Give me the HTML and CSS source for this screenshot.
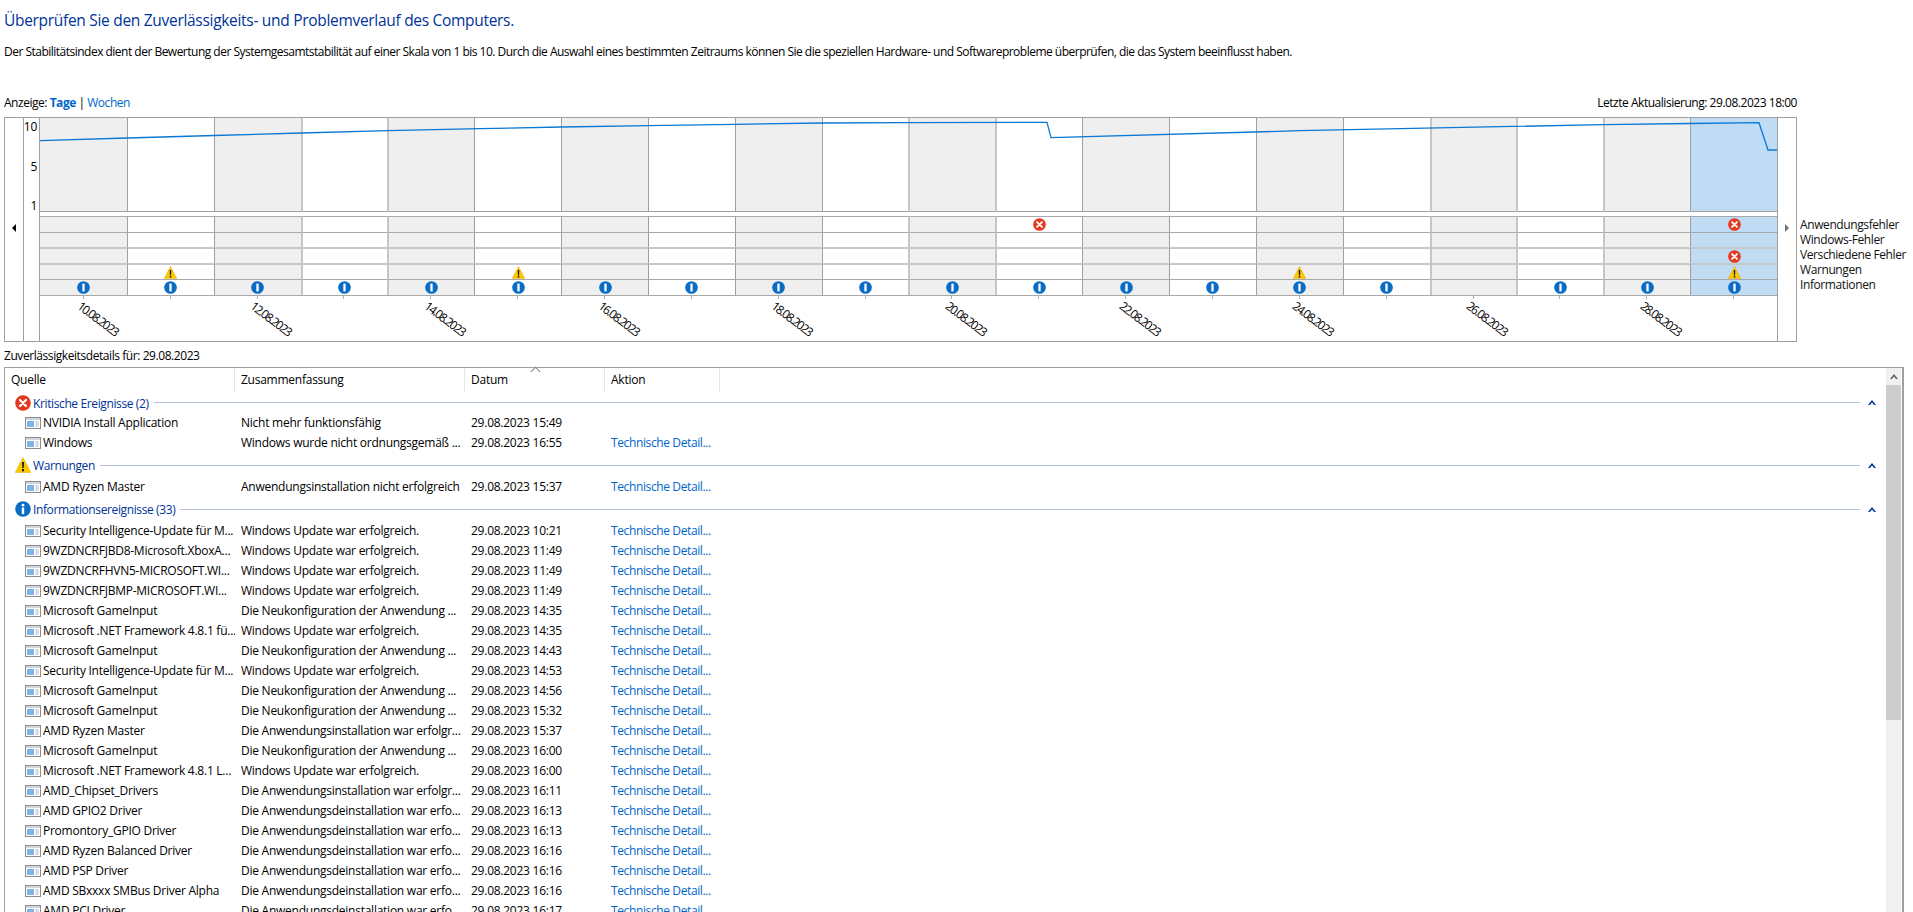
FILE: index.html
```html
<!DOCTYPE html>
<html lang="de">
<head>
    <meta charset="UTF-8">
    <title>Zuverlässigkeitsverlauf</title>
    <link rel="stylesheet" href="styles.css">
</head>
<body>
    <svg class="icon-defs" aria-hidden="true">
        <symbol id="i-error" viewBox="0 0 16 16">
            <circle cx="8" cy="8" r="7.8" fill="#e5391f"/>
            <path d="M5 5l6 6M11 5l-6 6" stroke="#fff" stroke-width="2.2" stroke-linecap="round"/>
        </symbol>
        <symbol id="i-warn" viewBox="0 0 16 16">
            <path d="M8 .6L15.8 15.4H.2z" fill="#fcc800" stroke="#e0a800" stroke-width=".5"/>
            <path d="M7 5h2l-.3 6H7.3zM7 12h2v2.2H7z" fill="#1a1a1a"/>
        </symbol>
        <symbol id="i-info" viewBox="0 0 16 16">
            <circle cx="8" cy="8" r="7.8" fill="#0a6cc4"/>
            <rect x="6.6" y="3.2" width="2.8" height="9.6" fill="#fff"/>
        </symbol>
        <symbol id="i-info-big" viewBox="0 0 16 16">
            <circle cx="8" cy="8" r="7.8" fill="#0a6cc4"/>
            <circle cx="8" cy="4.2" r="1.4" fill="#fff"/>
            <rect x="6.8" y="6.5" width="2.4" height="6.6" fill="#fff"/>
        </symbol>
        <symbol id="i-app" viewBox="0 0 16 12">
            <rect x=".5" y=".5" width="15" height="11" fill="#fff" stroke="#8c8c8c"/>
            <rect x="1" y="1" width="14" height="2" fill="#cfd6df"/>
            <rect x="2" y="4" width="7" height="6" fill="#7fb2e5"/>
            <path d="M10.5 5h3M10.5 7h3M10.5 9h3" stroke="#a8b0ba"/>
        </symbol>
        <symbol id="i-chevron" viewBox="0 0 8 5">
            <path d="M0 5L4 0l4 5H6L4 2.5 2 5z"/>
        </symbol>
    </svg>

    <h1 class="page-title">Überprüfen Sie den Zuverlässigkeits- und Problemverlauf des Computers.</h1>
    <p class="page-intro">Der Stabilitätsindex dient der Bewertung der Systemgesamtstabilität auf einer Skala von 1 bis 10. Durch die Auswahl eines bestimmten Zeitraums können Sie die speziellen Hardware- und Softwareprobleme überprüfen, die das System beeinflusst haben.</p>

    <div class="toolbar">
        <div>Anzeige: <a href="#" class="view-link active">Tage</a> | <a href="#" class="view-link">Wochen</a></div>
        <div>Letzte Aktualisierung: 29.08.2023 18:00</div>
    </div>

    <div class="chart-row">
        <div class="chart">
            <div class="chart-nav left"><span class="arrow-left"></span></div>
            <div class="axis"><span>10</span><span>5</span><span>1</span></div>
            <div class="plot">
                <div class="day shaded first"><div class="graph"></div><div class="gap"></div><div class="slot"></div><div class="slot"></div><div class="slot"></div><div class="slot"></div><div class="slot"><svg class="ico"><use href="#i-info"/></svg></div><div class="foot"><span class="date">10.08.2023</span></div></div>
                <div class="day"><div class="graph"></div><div class="gap"></div><div class="slot"></div><div class="slot"></div><div class="slot"></div><div class="slot"><svg class="ico"><use href="#i-warn"/></svg></div><div class="slot"><svg class="ico"><use href="#i-info"/></svg></div><div class="foot"></div></div>
                <div class="day shaded"><div class="graph"></div><div class="gap"></div><div class="slot"></div><div class="slot"></div><div class="slot"></div><div class="slot"></div><div class="slot"><svg class="ico"><use href="#i-info"/></svg></div><div class="foot"><span class="date">12.08.2023</span></div></div>
                <div class="day wide"><div class="graph"></div><div class="gap"></div><div class="slot"></div><div class="slot"></div><div class="slot"></div><div class="slot"></div><div class="slot"><svg class="ico"><use href="#i-info"/></svg></div><div class="foot"></div></div>
                <div class="day shaded wide"><div class="graph"></div><div class="gap"></div><div class="slot"></div><div class="slot"></div><div class="slot"></div><div class="slot"></div><div class="slot"><svg class="ico"><use href="#i-info"/></svg></div><div class="foot"><span class="date">14.08.2023</span></div></div>
                <div class="day"><div class="graph"></div><div class="gap"></div><div class="slot"></div><div class="slot"></div><div class="slot"></div><div class="slot"><svg class="ico"><use href="#i-warn"/></svg></div><div class="slot"><svg class="ico"><use href="#i-info"/></svg></div><div class="foot"></div></div>
                <div class="day shaded"><div class="graph"></div><div class="gap"></div><div class="slot"></div><div class="slot"></div><div class="slot"></div><div class="slot"></div><div class="slot"><svg class="ico"><use href="#i-info"/></svg></div><div class="foot"><span class="date">16.08.2023</span></div></div>
                <div class="day"><div class="graph"></div><div class="gap"></div><div class="slot"></div><div class="slot"></div><div class="slot"></div><div class="slot"></div><div class="slot"><svg class="ico"><use href="#i-info"/></svg></div><div class="foot"></div></div>
                <div class="day shaded"><div class="graph"></div><div class="gap"></div><div class="slot"></div><div class="slot"></div><div class="slot"></div><div class="slot"></div><div class="slot"><svg class="ico"><use href="#i-info"/></svg></div><div class="foot"><span class="date">18.08.2023</span></div></div>
                <div class="day"><div class="graph"></div><div class="gap"></div><div class="slot"></div><div class="slot"></div><div class="slot"></div><div class="slot"></div><div class="slot"><svg class="ico"><use href="#i-info"/></svg></div><div class="foot"></div></div>
                <div class="day shaded wide"><div class="graph"></div><div class="gap"></div><div class="slot"></div><div class="slot"></div><div class="slot"></div><div class="slot"></div><div class="slot"><svg class="ico"><use href="#i-info"/></svg></div><div class="foot"><span class="date">20.08.2023</span></div></div>
                <div class="day wide"><div class="graph"></div><div class="gap"></div><div class="slot"><svg class="ico"><use href="#i-error"/></svg></div><div class="slot"></div><div class="slot"></div><div class="slot"></div><div class="slot"><svg class="ico"><use href="#i-info"/></svg></div><div class="foot"></div></div>
                <div class="day shaded"><div class="graph"></div><div class="gap"></div><div class="slot"></div><div class="slot"></div><div class="slot"></div><div class="slot"></div><div class="slot"><svg class="ico"><use href="#i-info"/></svg></div><div class="foot"><span class="date">22.08.2023</span></div></div>
                <div class="day"><div class="graph"></div><div class="gap"></div><div class="slot"></div><div class="slot"></div><div class="slot"></div><div class="slot"></div><div class="slot"><svg class="ico"><use href="#i-info"/></svg></div><div class="foot"></div></div>
                <div class="day shaded"><div class="graph"></div><div class="gap"></div><div class="slot"></div><div class="slot"></div><div class="slot"></div><div class="slot"><svg class="ico"><use href="#i-warn"/></svg></div><div class="slot"><svg class="ico"><use href="#i-info"/></svg></div><div class="foot"><span class="date">24.08.2023</span></div></div>
                <div class="day"><div class="graph"></div><div class="gap"></div><div class="slot"></div><div class="slot"></div><div class="slot"></div><div class="slot"></div><div class="slot"><svg class="ico"><use href="#i-info"/></svg></div><div class="foot"></div></div>
                <div class="day shaded wide"><div class="graph"></div><div class="gap"></div><div class="slot"></div><div class="slot"></div><div class="slot"></div><div class="slot"></div><div class="slot"></div><div class="foot"><span class="date">26.08.2023</span></div></div>
                <div class="day wide"><div class="graph"></div><div class="gap"></div><div class="slot"></div><div class="slot"></div><div class="slot"></div><div class="slot"></div><div class="slot"><svg class="ico"><use href="#i-info"/></svg></div><div class="foot"></div></div>
                <div class="day shaded wide"><div class="graph"></div><div class="gap"></div><div class="slot"></div><div class="slot"></div><div class="slot"></div><div class="slot"></div><div class="slot"><svg class="ico"><use href="#i-info"/></svg></div><div class="foot"><span class="date">28.08.2023</span></div></div>
                <div class="day selected"><div class="graph"></div><div class="gap"></div><div class="slot"><svg class="ico"><use href="#i-error"/></svg></div><div class="slot"></div><div class="slot"><svg class="ico"><use href="#i-error"/></svg></div><div class="slot"><svg class="ico"><use href="#i-warn"/></svg></div><div class="slot"><svg class="ico"><use href="#i-info"/></svg></div><div class="foot"></div></div>
                <svg class="stability-line" viewBox="0 0 1737 94" width="1737" height="94">
                    <polyline points="0,22.7 87,20 174,17.5 261,15 348,12.7 440,10.7 521,9 608,7.7 695,6.3 782,5 865,4.7 1007,4.3 1011,19.7 1260,12.7 1460,8.7 1564,6.7 1650,5.5 1719,4.7 1728,32 1737,32"/>
                </svg>
            </div>
            <div class="chart-nav right"><span class="arrow-right"></span></div>
        </div>
        <div class="legend">
            <div>Anwendungsfehler</div>
            <div>Windows-Fehler</div>
            <div>Verschiedene Fehler</div>
            <div>Warnungen</div>
            <div>Informationen</div>
        </div>
    </div>

    <div class="details-label">Zuverlässigkeitsdetails für: 29.08.2023</div>

    <div class="list">
        <div class="list-body">
            <div class="list-head">
                <div class="head-cell">Quelle</div>
                <div class="head-cell">Zusammenfassung</div>
                <div class="head-cell sorted">Datum</div>
                <div class="head-cell">Aktion</div>
            </div>

            <div class="group first"><svg class="group-ico"><use href="#i-error"/></svg><span class="group-name">Kritische Ereignisse (2)</span><span class="group-line"></span><svg class="group-toggle"><use href="#i-chevron"/></svg></div>
            <div class="row"><div class="source"><svg class="app-ico"><use href="#i-app"/></svg>NVIDIA Install Application</div><div class="cell">Nicht mehr funktionsfähig</div><div class="cell">29.08.2023 15:49</div><div class="cell"></div></div>
            <div class="row"><div class="source"><svg class="app-ico"><use href="#i-app"/></svg>Windows</div><div class="cell">Windows wurde nicht ordnungsgemäß ...</div><div class="cell">29.08.2023 16:55</div><div class="cell"><a href="#">Technische Detail...</a></div></div>

            <div class="group"><svg class="group-ico"><use href="#i-warn"/></svg><span class="group-name">Warnungen</span><span class="group-line"></span><svg class="group-toggle"><use href="#i-chevron"/></svg></div>
            <div class="row"><div class="source"><svg class="app-ico"><use href="#i-app"/></svg>AMD Ryzen Master</div><div class="cell">Anwendungsinstallation nicht erfolgreich</div><div class="cell">29.08.2023 15:37</div><div class="cell"><a href="#">Technische Detail...</a></div></div>

            <div class="group"><svg class="group-ico"><use href="#i-info-big"/></svg><span class="group-name">Informationsereignisse (33)</span><span class="group-line"></span><svg class="group-toggle"><use href="#i-chevron"/></svg></div>
            <div class="row"><div class="source"><svg class="app-ico"><use href="#i-app"/></svg>Security Intelligence-Update für M...</div><div class="cell">Windows Update war erfolgreich.</div><div class="cell">29.08.2023 10:21</div><div class="cell"><a href="#">Technische Detail...</a></div></div>
            <div class="row"><div class="source"><svg class="app-ico"><use href="#i-app"/></svg>9WZDNCRFJBD8-Microsoft.XboxA...</div><div class="cell">Windows Update war erfolgreich.</div><div class="cell">29.08.2023 11:49</div><div class="cell"><a href="#">Technische Detail...</a></div></div>
            <div class="row"><div class="source"><svg class="app-ico"><use href="#i-app"/></svg>9WZDNCRFHVN5-MICROSOFT.WI...</div><div class="cell">Windows Update war erfolgreich.</div><div class="cell">29.08.2023 11:49</div><div class="cell"><a href="#">Technische Detail...</a></div></div>
            <div class="row"><div class="source"><svg class="app-ico"><use href="#i-app"/></svg>9WZDNCRFJBMP-MICROSOFT.WI...</div><div class="cell">Windows Update war erfolgreich.</div><div class="cell">29.08.2023 11:49</div><div class="cell"><a href="#">Technische Detail...</a></div></div>
            <div class="row"><div class="source"><svg class="app-ico"><use href="#i-app"/></svg>Microsoft GameInput</div><div class="cell">Die Neukonfiguration der Anwendung ...</div><div class="cell">29.08.2023 14:35</div><div class="cell"><a href="#">Technische Detail...</a></div></div>
            <div class="row"><div class="source"><svg class="app-ico"><use href="#i-app"/></svg>Microsoft .NET Framework 4.8.1 fü...</div><div class="cell">Windows Update war erfolgreich.</div><div class="cell">29.08.2023 14:35</div><div class="cell"><a href="#">Technische Detail...</a></div></div>
            <div class="row"><div class="source"><svg class="app-ico"><use href="#i-app"/></svg>Microsoft GameInput</div><div class="cell">Die Neukonfiguration der Anwendung ...</div><div class="cell">29.08.2023 14:43</div><div class="cell"><a href="#">Technische Detail...</a></div></div>
            <div class="row"><div class="source"><svg class="app-ico"><use href="#i-app"/></svg>Security Intelligence-Update für M...</div><div class="cell">Windows Update war erfolgreich.</div><div class="cell">29.08.2023 14:53</div><div class="cell"><a href="#">Technische Detail...</a></div></div>
            <div class="row"><div class="source"><svg class="app-ico"><use href="#i-app"/></svg>Microsoft GameInput</div><div class="cell">Die Neukonfiguration der Anwendung ...</div><div class="cell">29.08.2023 14:56</div><div class="cell"><a href="#">Technische Detail...</a></div></div>
            <div class="row"><div class="source"><svg class="app-ico"><use href="#i-app"/></svg>Microsoft GameInput</div><div class="cell">Die Neukonfiguration der Anwendung ...</div><div class="cell">29.08.2023 15:32</div><div class="cell"><a href="#">Technische Detail...</a></div></div>
            <div class="row"><div class="source"><svg class="app-ico"><use href="#i-app"/></svg>AMD Ryzen Master</div><div class="cell">Die Anwendungsinstallation war erfolgr...</div><div class="cell">29.08.2023 15:37</div><div class="cell"><a href="#">Technische Detail...</a></div></div>
            <div class="row"><div class="source"><svg class="app-ico"><use href="#i-app"/></svg>Microsoft GameInput</div><div class="cell">Die Neukonfiguration der Anwendung ...</div><div class="cell">29.08.2023 16:00</div><div class="cell"><a href="#">Technische Detail...</a></div></div>
            <div class="row"><div class="source"><svg class="app-ico"><use href="#i-app"/></svg>Microsoft .NET Framework 4.8.1 L...</div><div class="cell">Windows Update war erfolgreich.</div><div class="cell">29.08.2023 16:00</div><div class="cell"><a href="#">Technische Detail...</a></div></div>
            <div class="row"><div class="source"><svg class="app-ico"><use href="#i-app"/></svg>AMD_Chipset_Drivers</div><div class="cell">Die Anwendungsinstallation war erfolgr...</div><div class="cell">29.08.2023 16:11</div><div class="cell"><a href="#">Technische Detail...</a></div></div>
            <div class="row"><div class="source"><svg class="app-ico"><use href="#i-app"/></svg>AMD GPIO2 Driver</div><div class="cell">Die Anwendungsdeinstallation war erfo...</div><div class="cell">29.08.2023 16:13</div><div class="cell"><a href="#">Technische Detail...</a></div></div>
            <div class="row"><div class="source"><svg class="app-ico"><use href="#i-app"/></svg>Promontory_GPIO Driver</div><div class="cell">Die Anwendungsdeinstallation war erfo...</div><div class="cell">29.08.2023 16:13</div><div class="cell"><a href="#">Technische Detail...</a></div></div>
            <div class="row"><div class="source"><svg class="app-ico"><use href="#i-app"/></svg>AMD Ryzen Balanced Driver</div><div class="cell">Die Anwendungsdeinstallation war erfo...</div><div class="cell">29.08.2023 16:16</div><div class="cell"><a href="#">Technische Detail...</a></div></div>
            <div class="row"><div class="source"><svg class="app-ico"><use href="#i-app"/></svg>AMD PSP Driver</div><div class="cell">Die Anwendungsdeinstallation war erfo...</div><div class="cell">29.08.2023 16:16</div><div class="cell"><a href="#">Technische Detail...</a></div></div>
            <div class="row"><div class="source"><svg class="app-ico"><use href="#i-app"/></svg>AMD SBxxxx SMBus Driver Alpha</div><div class="cell">Die Anwendungsdeinstallation war erfo...</div><div class="cell">29.08.2023 16:16</div><div class="cell"><a href="#">Technische Detail...</a></div></div>
            <div class="row"><div class="source"><svg class="app-ico"><use href="#i-app"/></svg>AMD PCI Driver</div><div class="cell">Die Anwendungsdeinstallation war erfo...</div><div class="cell">29.08.2023 16:17</div><div class="cell"><a href="#">Technische Detail...</a></div></div>
        </div>
        <div class="scrollbar">
            <div class="scroll-btn"><svg class="scroll-up"><use href="#i-chevron"/></svg></div>
            <div class="scroll-thumb"></div>
            <div class="scroll-track"></div>
        </div>
    </div>
</body>
</html>
```

FILE: styles.css
```css
/* Basic styling */
* {
    margin: 0;
    padding: 0;
    box-sizing: border-box;
}

html, body {
    height: 912px;
    overflow: hidden;
}

body {
    padding-left: 4px;
    background-color: #fff;
    color: #000;
    font-family: "Open Sans", "Noto Sans", sans-serif;
    font-size: 12px;
    letter-spacing: -0.25px;
    line-height: 16px;
}

a {
    text-decoration: none;
}

.icon-defs {
    display: none;
}

/* Header text */
.page-title {
    margin-top: 10px;
    font-size: 15.5px;
    font-weight: 400;
    letter-spacing: -0.3px;
    line-height: 20px;
    color: #003399;
}

.page-intro {
    margin-top: 14px;
    letter-spacing: -0.51px;
    white-space: nowrap;
}

.toolbar {
    display: flex;
    justify-content: space-between;
    width: 1793px;
    margin-top: 35px;
    letter-spacing: -0.47px;
}

.view-link {
    color: #0066cc;
}

.view-link.active {
    font-weight: 700;
}

/* Chart */
.chart-row {
    display: flex;
    margin-top: 6px;
}

.chart {
    display: flex;
    width: 1793px;
    height: 225px;
    border: 1px solid #a0a0a0;
}

.chart-nav {
    display: flex;
    flex: none;
    width: 19px;
    height: 100%;
    align-items: flex-start;
    justify-content: center;
    padding-top: 106px;
}

.chart-nav.left {
    border-right: 1px solid #a0a0a0;
}

.chart-nav.right {
    border-left: 1px solid #a0a0a0;
}

.arrow-left {
    border-top: 4px solid transparent;
    border-bottom: 4px solid transparent;
    border-right: 4px solid #000;
}

.arrow-right {
    border-top: 4px solid transparent;
    border-bottom: 4px solid transparent;
    border-left: 4px solid #707070;
}

.axis {
    display: flex;
    flex: none;
    flex-direction: column;
    justify-content: space-between;
    align-items: flex-end;
    width: 16px;
    height: 96px;
    padding: 1px 2px 0 0;
    border-right: 1px solid #a0a0a0;
    position: relative;
}

.axis::after {
    content: "";
    position: absolute;
    top: 96px;
    right: -1px;
    width: 1px;
    height: 127px;
    background-color: #a0a0a0;
}

.plot {
    position: relative;
    display: grid;
    grid-template-columns: repeat(20, 1fr);
    width: 1737px;
}

.day {
    display: flex;
    flex-direction: column;
    min-width: 0;
}

.graph {
    height: 94px;
    border-left: 1px solid #a0a0a0;
    border-bottom: 1px solid #a0a0a0;
}

.gap {
    height: 4px;
}

.slot {
    display: flex;
    align-items: center;
    justify-content: center;
    height: 16px;
    border-left: 1px solid #a0a0a0;
    border-top: 1px solid #a9a9a9;
}

.slot:nth-child(4) {
    height: 15px;
}

.slot:nth-child(5),
.slot:nth-child(6) {
    border-top: 2px solid #c8c8c8;
}

.day.wide .graph,
.day.wide .slot {
    border-left: 2px solid #c6c6c6;
}

.day.first .graph,
.day.first .slot {
    border-left: none;
}

.day.shaded .graph,
.day.shaded .slot {
    background-color: #efefef;
}

.day.selected .graph,
.day.selected .slot {
    background-color: #c0dcf4;
}

.ico {
    width: 13px;
    height: 13px;
}

.foot {
    display: flex;
    flex-direction: column;
    align-items: center;
    height: 46px;
    border-top: 1px solid #a9a9a9;
}

.foot::before {
    content: "";
    flex: none;
    width: 1px;
    height: 3px;
    background-color: #b0b0b0;
}

.date {
    white-space: nowrap;
    letter-spacing: -1.35px;
    transform: translate(14px, 12px) rotate(37deg);
}

.stability-line {
    position: absolute;
    top: 0;
    left: 0;
}

.stability-line polyline {
    fill: none;
    stroke: #0a78d4;
    stroke-width: 1.3;
}

.legend {
    margin: 100px 0 0 3px;
    line-height: 15px;
    letter-spacing: -0.4px;
    color: #111;
    white-space: nowrap;
}

/* Details list */
.details-label {
    margin-top: 6px;
    letter-spacing: -0.43px;
}

.list {
    display: flex;
    width: 1900px;
    height: 545px;
    margin-top: 3px;
    border: 1px solid #a0a0a0;
    border-bottom: none;
    border-right: 2px solid #a0a0a0;
}

.list-body {
    flex: 1;
    min-width: 0;
}

.list-head,
.row {
    display: grid;
    grid-template-columns: 230px 230px 140px 115px;
}

.list-head {
    height: 24px;
}

.head-cell {
    position: relative;
    padding-left: 6px;
    line-height: 24px;
    border-right: 1px solid #e5e5e5;
}

.head-cell.sorted::before {
    content: "";
    position: absolute;
    top: 0;
    left: 67px;
    width: 6px;
    height: 6px;
    border-left: 1px solid #8a8a8a;
    border-top: 1px solid #8a8a8a;
    transform: rotate(45deg);
}

.group {
    display: flex;
    align-items: center;
    height: 24px;
    padding: 0 10px 0 10px;
    letter-spacing: -0.38px;
    color: #003399;
}

.group.first {
    height: 21px;
}

.group-ico {
    flex: none;
    width: 16px;
    height: 16px;
    margin-right: 2px;
}

.group-name {
    padding-top: 2px;
    white-space: nowrap;
}

.group-line {
    flex: 1;
    height: 1px;
    margin-left: 5px;
    background-color: #b4c1dc;
}

.group-toggle {
    flex: none;
    width: 8px;
    height: 5px;
    margin-left: 8px;
    fill: #003399;
}

.row {
    height: 20px;
    line-height: 20px;
}

.source {
    display: flex;
    align-items: center;
    padding-left: 20px;
    white-space: nowrap;
    overflow: hidden;
}

.app-ico {
    flex: none;
    width: 16px;
    height: 12px;
    margin-right: 2px;
}

.cell {
    padding-left: 6px;
    white-space: nowrap;
    overflow: hidden;
}

.cell a {
    color: #0066cc;
    letter-spacing: -0.38px;
}

.scrollbar {
    display: flex;
    flex: none;
    flex-direction: column;
    width: 15px;
    margin-right: 1px;
}

.scroll-btn {
    display: flex;
    align-items: center;
    justify-content: center;
    height: 17px;
    background-color: #f0f0f0;
}

.scroll-up {
    width: 8px;
    height: 5px;
    fill: #606060;
}

.scroll-thumb {
    height: 335px;
    background-color: #cdcdcd;
}

.scroll-track {
    flex: 1;
    background-color: #f0f0f0;
}
```
